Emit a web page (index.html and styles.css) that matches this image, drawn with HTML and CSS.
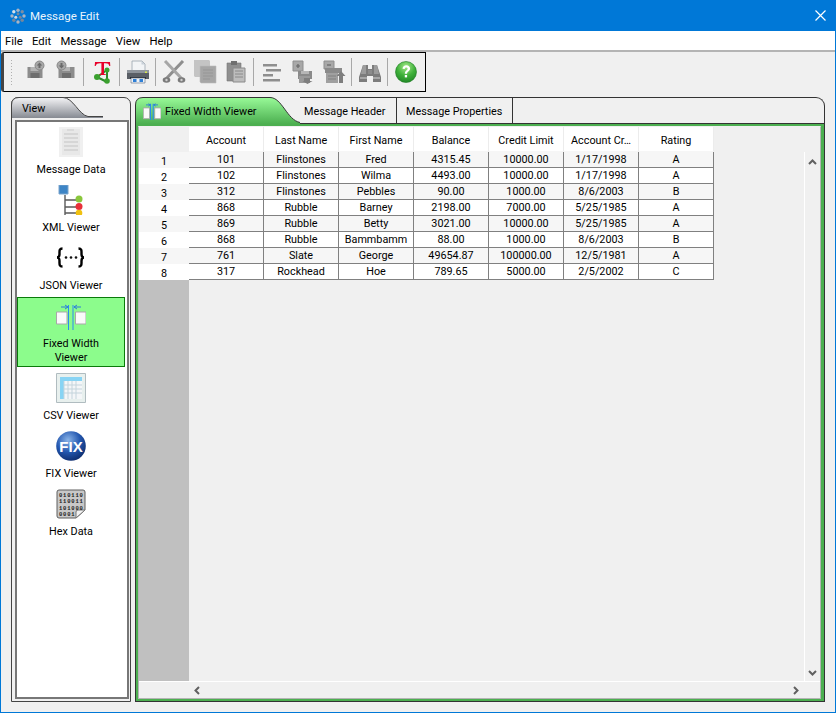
FILE: index.html
```html
<!DOCTYPE html>
<html lang="en">
<head>
<meta charset="utf-8">
<title>Message Edit</title>
<link rel="stylesheet" href="styles.css">
</head>
<body>
<div class="window">
  <header class="titlebar">
    <svg class="app-icon" width="16" height="16" viewBox="0 0 16 16">
      <circle cx="8" cy="2.2" r="1.7" fill="#a8b4c4"/><circle cx="12.2" cy="3.8" r="1.7" fill="#7e8ea2"/>
      <circle cx="14" cy="8" r="1.7" fill="#a8b4c4"/><circle cx="12.2" cy="12.2" r="1.700" fill="#76869a"/>
      <circle cx="8" cy="14" r="1.7" fill="#a8b4c4"/><circle cx="3.8" cy="12.2" r="1.700" fill="#76869a"/>
      <circle cx="2" cy="8" r="1.7" fill="#a8b4c4"/><circle cx="3.8" cy="3.8" r="1.700" fill="#d8e0e8"/>
      <circle cx="8" cy="5.8" r="1.5" fill="#76869a"/><circle cx="5.800" cy="9.200" r="1.500" fill="#d0d8e0"/><circle cx="10.200" cy="9.200" r="1.500" fill="#76869a"/>
    </svg>
    <span class="title">Message Edit</span>
    <svg class="close" width="11" height="11" viewBox="0 0 11 11"><path d="M.5 .5l10 10M10.500 .5l-10 10" stroke="#fff" stroke-width="1.200" fill="none"/></svg>
  </header>
  <nav class="menubar"><span>File</span><span>Edit</span><span>Message</span><span>View</span><span>Help</span></nav>

  <div class="toolbar">
    <span class="grip"></span>
    <button class="tool"><svg width="24" height="24" viewBox="0 0 24 24"><path d="M4.500 7h15v11h-15z" fill="#8c8c8c"/><path d="M7.500 7h8v4h-8z" fill="#b4b4b4"/><path d="M7.500 13h9v5h-9z" fill="#6e6e6e"/><circle cx="16.500" cy="5.500" r="4.500" fill="#a8a8a8" stroke="#888"/><path d="M16.500 2.500l-2.800 3h1.800v2.500h2V5.500h1.800z" fill="#6a6a6a"/></svg></button>
    <button class="tool"><svg width="24" height="24" viewBox="0 0 24 24"><path d="M4.500 7h16v11h-16z" fill="#8c8c8c"/><path d="M8 7h8v4H8z" fill="#b4b4b4"/><path d="M8 13h9v5H8z" fill="#6e6e6e"/><circle cx="7.500" cy="5.500" r="4.500" fill="#a8a8a8" stroke="#888"/><path d="M7.500 8.500l-2.800-3h1.800V3h2v2.500h1.800z" fill="#6a6a6a"/></svg></button>
    <i class="sep"></i>
    <button class="tool"><svg width="24" height="24" viewBox="0 0 24 24"><path d="M7 17l10-7M7 17l10 5M17 10v12" stroke="#2c8a2c" stroke-width="2"/><circle cx="17" cy="10" r="2.500" fill="#3aa02e"/><circle cx="7" cy="17" r="3" fill="#3aa02e"/><circle cx="17" cy="21" r="2.800" fill="#3aa02e"/><path d="M5 2h15l.3 4h-1c-.5-2-1.300-2.700-3.800-2.700h-1.500v9.900c0 .8.600 1 1.900 1V15H9.500v-.8c1.400 0 1.900-.2 1.900-1V3.300H10C7.500 3.300 6.200 4 5.700 6h-1z" fill="#e8002a"/></svg></button>
    <i class="sep"></i>
    <button class="tool"><svg width="24" height="24" viewBox="0 0 24 24"><path d="M6 1h10l3 3v8H6z" fill="#f2f4f6" stroke="#9aa4ae" stroke-width=".8"/><path d="M15.500 1v3.500H19" fill="#c8d0d8"/><path d="M1 10h22v9H1z" fill="#5a5f66"/><path d="M1 10h22v3H1z" fill="#8e949b"/><path d="M4 17h16v2H4z" fill="#2a2e33"/><path d="M5 18h14v5H5z" fill="#eef2f6" stroke="#5a6a80" stroke-width=".6"/><path d="M7 19h3.500v3H7z" fill="#2e7fd6"/><path d="M13.500 19H17v3h-3.500z" fill="#2e7fd6"/><path d="M19 11.500h2v1.500h-2z" fill="#d6e84a"/></svg></button>
    <i class="sep"></i>
    <button class="tool"><svg width="24" height="24" viewBox="0 0 24 24"><path d="M21 1L3 20" stroke="#8e8e8e" stroke-width="3"/><path d="M3 1l18 19" stroke="#a6a6a6" stroke-width="3"/><ellipse cx="4.500" cy="20" rx="3.800" ry="2.800" fill="#7a7a7a"/><ellipse cx="19.500" cy="20" rx="3.800" ry="2.800" fill="#7a7a7a"/><circle cx="4.500" cy="20" r="1.200" fill="#cfcfcf"/><circle cx="19.500" cy="20" r="1.200" fill="#cfcfcf"/></svg></button>
    <button class="tool"><svg width="24" height="24" viewBox="0 0 24 24"><path d="M1 0h15l1 1v16H2l-1-1z" fill="#c4c4c4"/><path d="M7 6h16v17H8l-1-1z" fill="#a6a6a6" stroke="#bcbcbc" stroke-width=".6"/><path d="M10 10h10M10 13h10M10 16h10M10 19h7" stroke="#969696"/></svg></button>
    <button class="tool"><svg width="24" height="24" viewBox="0 0 24 24"><path d="M3 3h14v18H3z" fill="#8f8f8f" stroke="#777" stroke-width=".6"/><path d="M7 1h6v4H7z" fill="#6f6f6f"/><path d="M9 8h12v14H9z" fill="#bdbdbd" stroke="#8a8a8a"/><path d="M11 11h8M11 14h8M11 17h8" stroke="#8a8a8a"/></svg></button>
    <i class="sep"></i>
    <button class="tool"><svg width="24" height="24" viewBox="0 0 24 24"><path d="M3 4h14v2.500H3zM6 9h15v2.500H6zM3 14h10v2.500H3zM3 19h17v2.500H3z" fill="#8e8e8e"/></svg></button>
    <button class="tool"><svg width="24" height="24" viewBox="0 0 24 24"><path d="M2 1h10v10H2z" fill="#a8a8a8" stroke="#8e8e8e"/><path d="M5 6h4M7 4v4" stroke="#666" stroke-width="1.200"/><path d="M7 11h14v8H7z" fill="#8a8a8a"/><path d="M10 11h8v3h-8z" fill="#b6b6b6"/><path d="M8 16h11v7H8z" fill="#9a9a9a"/><path d="M13 18h6v3h2.500l-5 3-5-3H13z" fill="#7e7e7e"/></svg></button>
    <button class="tool"><svg width="24" height="24" viewBox="0 0 24 24"><path d="M2 1h10v8H2z" fill="#a8a8a8" stroke="#8e8e8e"/><path d="M5 5h4" stroke="#666" stroke-width="1.200"/><path d="M3 8h17v5H3z" fill="#8a8a8a"/><path d="M4 13h12v10H4z" fill="#a0a0a0"/><path d="M6 16h8M6 19h8" stroke="#808080"/><path d="M19 11l4.500 5H21v7h-4v-7h-2.500z" fill="#7e7e7e"/></svg></button>
    <i class="sep"></i>
    <button class="tool"><svg width="24" height="24" viewBox="0 0 24 24"><path d="M5 5h5v4h4V5h5l4 12v5h-8v-6h-6v6H1v-5z" fill="#7c7c7c"/><path d="M5 5h3v9H3zM16 5h3l2 9h-5z" fill="#9c9c9c"/><path d="M10 10h4v4h-4z" fill="#8c8c8c"/><path d="M2 17h7v2H2zM15 17h7v2h-7z" fill="#a8a8a8"/></svg></button>
    <i class="sep"></i>
    <button class="tool"><svg width="24" height="24" viewBox="0 0 24 24"><defs><radialGradient id="help" cx=".5" cy=".25" r=".85"><stop offset="0" stop-color="#a4e88a"/><stop offset=".5" stop-color="#3fb13a"/><stop offset="1" stop-color="#1b7d22"/></radialGradient></defs><circle cx="12" cy="12" r="10.500" fill="url(#help)" stroke="#1a7a20" stroke-width=".6"/><path d="M8.500 8.800c.2-2.300 1.700-3.500 3.800-3.500 2.200 0 3.800 1.300 3.800 3.200 0 2.700-3 2.800-3 5.200h-2.300c0-3.300 2.800-3.400 2.800-5 0-.8-.6-1.300-1.400-1.300-.9 0-1.400.6-1.500 1.600z" fill="#fff"/><path d="M10.800 15h2.300v2.400h-2.300z" fill="#fff"/></svg></button>
  </div>

  <main class="workspace">
    <aside class="panel">
      <div class="panel-tab">
        <svg class="panel-tab-shape" width="92" height="21" viewBox="0 0 92 21"><defs><linearGradient id="viewgrad" x1="0" y1="0" x2="0" y2="1"><stop offset="0" stop-color="#f4f4f6"/><stop offset="1" stop-color="#868a92"/></linearGradient></defs><path d="M.5 21V8Q.5 .5 8 .5H52C62 .5 68 18 77 19.500H92V21z" fill="url(#viewgrad)"/><path d="M.5 21V8Q.5 .5 8 .5H52C62 .5 68 18 77 19.500H92" fill="none" stroke="#444"/></svg>
        <span class="panel-tab-label">View</span>
      </div>
      <div class="viewlist">
        <div class="viewitem">
          <svg width="30" height="30" viewBox="0 0 30 30"><path d="M3 0h24v30H3z" fill="#f0f0f0"/><path d="M6 2h18v26H6z" fill="#e8e8e8"/><path d="M8 6h14v2H8zM8 10h14v2H8zM8 14h14v2H8zM8 18h14v2H8zM8 22h14v2H8z" fill="#d6d6d6"/><path d="M11 2h7v2h-7z" fill="#dadada"/></svg>
          <span>Message Data</span>
        </div>
        <div class="viewitem">
          <svg width="30" height="30" viewBox="0 0 30 30"><path d="M9 10v20M9 15h13M9 22h13M9 28h13" stroke="#5a5a5a" stroke-width="1.400" fill="none"/><path d="M3 0h9v9H3z" fill="#3d85c6" stroke="#7aa4cc"/><circle cx="23" cy="14" r="3.500" fill="#8ac73c"/><circle cx="23" cy="21.500" r="3.500" fill="#e8303a"/><circle cx="23" cy="28" r="3.300" fill="#f0c010"/></svg>
          <span>XML Viewer</span>
        </div>
        <div class="viewitem">
          <svg width="30" height="30" viewBox="0 0 30 30"><path d="M6.500 5.500C3 5.500 3.500 8 3.500 11c0 2-.5 3.500-2.500 3.500 2 0 2.500 1.500 2.500 3.500 0 3-.5 5.500 3 5.500" fill="none" stroke="#000" stroke-width="2.400"/><path d="M22.500 5.500c3.500 0 3 2.500 3 5.500 0 2 .5 3.500 2.500 3.500-2 0-2.500 1.500-2.500 3.500 0 3 .5 5.500-3 5.500" fill="none" stroke="#000" stroke-width="2.400"/><circle cx="10" cy="14.500" r="1.300" fill="#111"/><circle cx="15" cy="14.500" r="1.300" fill="#111"/><circle cx="20" cy="14.500" r="1.300" fill="#111"/></svg>
          <span>JSON Viewer</span>
        </div>
        <div class="viewitem is-active">
          <svg width="30" height="30" viewBox="0 0 30 30"><path d="M.5 11h10.500v12H.5zM19.500 11H30v12H19.500z" fill="#fafafa" stroke="#a8a8a8"/><path d="M12.500 4v25M17 4v25" stroke="#2a8cf0"/><path d="M5 6h7M9 4l3 2-3 2M25 6h-7M21 4l-3 2 3 2" stroke="#2a7cd8" fill="none"/></svg>
          <span>Fixed Width<br>Viewer</span>
        </div>
        <div class="viewitem">
          <svg width="30" height="30" viewBox="0 0 30 30"><path d="M.5 .5h29v29H.5z" fill="#e8f0ee" stroke="#b0bcc0"/><path d="M4 4h22v22H4z" fill="#f4f6f8"/><path d="M4 4h22v4H4zM4 8h4v18H4z" fill="#88d4f4"/><path d="M8 12h18M8 16h18M8 20h18M12 8v18M16 8v18M20 8v18M8 8v18" stroke="#c4d4dc"/></svg>
          <span>CSV Viewer</span>
        </div>
        <div class="viewitem">
          <svg width="30" height="30" viewBox="0 0 30 30"><defs><radialGradient id="globe" cx=".4" cy=".3" r=".8"><stop offset="0" stop-color="#8ab4e8"/><stop offset=".5" stop-color="#2458b0"/><stop offset="1" stop-color="#0a2460"/></radialGradient></defs><circle cx="15" cy="15" r="14.800" fill="url(#globe)"/><text x="15" y="20.500" text-anchor="middle" class="fix">FIX</text></svg>
          <span>FIX Viewer</span>
        </div>
        <div class="viewitem">
          <svg width="30" height="30" viewBox="0 0 30 30"><path d="M3 1h24a2 2 0 0 1 2 2v18l-9 8H3a2 2 0 0 1-2-2V3a2 2 0 0 1 2-2z" fill="#c8c8c8" stroke="#5e5e5e"/><path d="M29 21h-7a2 2 0 0 0-2 2v6z" fill="#f2f2f2" stroke="#777"/><text x="3" y="7.500" class="bits">010110</text><text x="3" y="14" class="bits">110011</text><text x="3" y="20.500" class="bits">101000</text><text x="3" y="27" class="bits">0001</text></svg>
          <span>Hex Data</span>
        </div>
      </div>
    </aside>

    <section class="pane">
      <div class="tabs">
        <div class="tab-active">
          <svg class="tab-shape" width="166" height="27" viewBox="0 0 166 27"><defs><linearGradient id="tabgrad" x1="0" y1="0" x2="0" y2="1"><stop offset="0" stop-color="#98fa98"/><stop offset="1" stop-color="#4caf50"/></linearGradient></defs><path d="M.5 27V8Q.5 .5 8 .5H135C147 .5 152 23 165 25.500V27z" fill="url(#tabgrad)"/><path d="M.5 27V8Q.5 .5 8 .5H135C147 .5 152 23 165 25.500" fill="none" stroke="#333"/></svg>
          <svg class="tab-icon" width="18" height="17" viewBox="0 3 30 28"><path d="M.5 11h10.500v18H.5zM19.500 11H30v18H19.500z" fill="#fafafa" stroke="#a8a8a8" stroke-width="1.500"/><path d="M12.500 4v27M17 4v27" stroke="#2a8cf0" stroke-width="1.800"/><path d="M5 6h7M9 4l3 2-3 2M25 6h-7M21 4l-3 2 3 2" stroke="#2a7cd8" stroke-width="1.500" fill="none"/></svg>
          <span class="tab-active-label">Fixed Width Viewer</span>
        </div>
        <div class="tab tab-header">Message Header</div>
        <div class="tab tab-props">Message Properties</div>
        <div class="tab-fill"></div>
      </div>
      <div class="frame">
        <div class="frame-green">
          <div class="frame-inner">
            <div class="sheet">
              <div class="rowheads">
                <div class="corner"></div>
                <div class="rowhead">1</div><div class="rowhead">2</div><div class="rowhead">3</div><div class="rowhead">4</div>
                <div class="rowhead">5</div><div class="rowhead">6</div><div class="rowhead">7</div><div class="rowhead">8</div>
                <div class="rowfill"></div>
              </div>
              <div class="tablewrap">
                <table class="data">
                  <thead>
                    <tr><th>Account</th><th>Last Name</th><th>First Name</th><th>Balance</th><th>Credit Limit</th><th>Account Cr…</th><th>Rating</th></tr>
                  </thead>
                  <tbody>
                    <tr><td>101</td><td>Flinstones</td><td>Fred</td><td>4315.45</td><td>10000.00</td><td>1/17/1998</td><td>A</td></tr>
                    <tr><td>102</td><td>Flinstones</td><td>Wilma</td><td>4493.00</td><td>10000.00</td><td>1/17/1998</td><td>A</td></tr>
                    <tr><td>312</td><td>Flinstones</td><td>Pebbles</td><td>90.00</td><td>1000.00</td><td>8/6/2003</td><td>B</td></tr>
                    <tr><td>868</td><td>Rubble</td><td>Barney</td><td>2198.00</td><td>7000.00</td><td>5/25/1985</td><td>A</td></tr>
                    <tr><td>869</td><td>Rubble</td><td>Betty</td><td>3021.00</td><td>10000.00</td><td>5/25/1985</td><td>A</td></tr>
                    <tr><td>868</td><td>Rubble</td><td>Bammbamm</td><td>88.00</td><td>1000.00</td><td>8/6/2003</td><td>B</td></tr>
                    <tr><td>761</td><td>Slate</td><td>George</td><td>49654.87</td><td>100000.00</td><td>12/5/1981</td><td>A</td></tr>
                    <tr><td>317</td><td>Rockhead</td><td>Hoe</td><td>789.65</td><td>5000.00</td><td>2/5/2002</td><td>C</td></tr>
                  </tbody>
                </table>
              </div>
              <div class="vscroll">
                <svg width="9" height="6" viewBox="0 0 9 6"><path d="M1 5l3.500-3.500L8 5" stroke="#606060" stroke-width="2" fill="none"/></svg>
                <svg width="9" height="6" viewBox="0 0 9 6"><path d="M1 1l3.500 3.500L8 1" stroke="#606060" stroke-width="2" fill="none"/></svg>
              </div>
            </div>
            <div class="hscroll">
              <svg width="6" height="9" viewBox="0 0 6 9"><path d="M5 1L1.500 4.500 5 8" stroke="#606060" stroke-width="2" fill="none"/></svg>
              <svg width="6" height="9" viewBox="0 0 6 9"><path d="M1 1l3.500 3.500L1 8" stroke="#606060" stroke-width="2" fill="none"/></svg>
            </div>
          </div>
        </div>
      </div>
    </section>
  </main>
</div>
</body>
</html>
```

FILE: styles.css
```css
* { box-sizing: border-box; }

html, body {
  margin: 0;
  padding: 0;
}

body {
  font-family: "Roboto", "Open Sans", sans-serif;
  font-size: 10.8px;
  color: #000;
  background: #f0f0f0;
}

.window {
  width: 836px;
  height: 713px;
  border: 1px solid #0078d7;
  border-top: 0;
  background: #f0f0f0;
  display: flex;
  flex-direction: column;
  overflow: hidden;
}

.titlebar {
  height: 31px;
  flex: none;
  background: #0078d7;
  color: #fff;
  display: flex;
  align-items: center;
  padding-left: 9px;
  padding-right: 9px;
}

.app-icon { flex: none; margin-right: 4px; }

.title { font-size: 11.5px; color: #eaf4fc; }

.close { margin-left: auto; }

.menubar {
  height: 21px;
  flex: none;
  background: #fff;
  border-bottom: 2px solid #b4b4b4;
  display: flex;
  align-items: center;
  padding: 1px 0 0 4px;
  gap: 9.3px;
  font-size: 11.3px;
}

.toolbar {
  width: 425px;
  height: 40px;
  flex: none;
  border: 1px solid #000;
  border-left: 3px solid #444;
  border-radius: 3px 0 0 3px;
  display: flex;
  align-items: center;
  padding-left: 6px;
}

.grip {
  width: 3px;
  height: 26px;
  margin-right: 6px;
  background-image: radial-gradient(circle, #b0b0b0 0.6px, transparent 0.7px);
  background-size: 3px 3px;
}

.tool {
  width: 31px;
  height: 30px;
  padding: 0;
  border: 0;
  background: none;
  display: flex;
  align-items: center;
  justify-content: center;
}

.sep {
  width: 1px;
  height: 28px;
  margin: 0 2px;
  background: #a8a8a8;
}

.workspace {
  flex: 1;
  min-height: 0;
  display: flex;
  gap: 4px;
  padding: 5px 10px 10px 10px;
}

/* left view chooser */
.panel {
  width: 120px;
  flex: none;
  display: flex;
  flex-direction: column;
  border: 1px solid #444;
  border-radius: 7px 7px 0 0;
  padding: 0 1px 2px 3px;
}

.panel-tab {
  position: relative;
  height: 22px;
  flex: none;
  margin-left: -3px;
}

.panel-tab-shape {
  position: absolute;
  left: -1px;
  top: -1px;
}

.panel-tab-label {
  position: absolute;
  left: 10px;
  top: 4px;
}

.viewlist {
  flex: 1;
  background: #fff;
  border: 2px solid #777;
  padding: 1px 2px 0 0;
  display: flex;
  flex-direction: column;
}

.viewitem {
  height: 58px;
  flex: none;
  padding-top: 4px;
  display: flex;
  flex-direction: column;
  align-items: center;
  text-align: center;
  line-height: 14px;
}

.viewitem svg {
  flex: none;
  margin-bottom: 6px;
}

.viewitem.is-active {
  height: 70px;
  margin-bottom: 2px;
  background: #8cfc8c;
  border: 1px solid #0a7a0a;
  padding-top: 3px;
}

.fix {
  font-family: "Liberation Sans", sans-serif;
  font-size: 15px;
  font-weight: 700;
  fill: #fff;
}

.bits {
  font-family: "Liberation Mono", monospace;
  font-size: 5.500px;
  font-weight: 700;
  letter-spacing: .8px;
  fill: #222;
}

/* right tab pane */
.pane {
  flex: 1;
  min-width: 0;
  display: flex;
  flex-direction: column;
}

.tabs {
  height: 26px;
  flex: none;
  display: flex;
}

.tab-active {
  position: relative;
  width: 165px;
  flex: none;
  z-index: 1;
}

.tab-shape {
  position: absolute;
  left: 0;
  top: 0;
}

.tab-icon {
  position: absolute;
  left: 8px;
  top: 6px;
}

.tab-active-label {
  position: absolute;
  left: 30px;
  top: 8px;
  white-space: nowrap;
}

.tab {
  border-top: 1px solid #333;
  border-right: 1px solid #333;
  padding: 7px 0 0 0;
  white-space: nowrap;
}

.tab-header { width: 97px; padding-left: 4px; }
.tab-props { width: 116px; padding-left: 9px; }

.tab-fill {
  flex: 1;
  border-top: 1px solid #333;
  border-right: 1px solid #333;
  border-radius: 0 9px 0 0;
}

.frame {
  flex: 1;
  min-height: 0;
  border: 1px solid #333;
  display: flex;
}

.frame-green {
  flex: 1;
  min-width: 0;
  border: 2px solid #4caf50;
  border-right-width: 3px;
  display: flex;
}

.frame-inner {
  flex: 1;
  min-width: 0;
  border: 1px solid #b4b4b4;
  border-top: 1px solid #f0f0f0;
  display: flex;
  flex-direction: column;
}

.sheet {
  flex: 1;
  min-height: 0;
  display: flex;
}

.rowheads {
  width: 50px;
  flex: none;
  display: flex;
  flex-direction: column;
}

.corner { height: 25px; flex: none; background: #f0f0f0; }

.rowhead {
  height: 16px;
  flex: none;
  text-align: center;
  line-height: 19px;
  background: #fff;
}

.rowhead:nth-child(even) { background: #f6f6f6; }

.rowfill { flex: 1; background: #c0c0c0; }

.tablewrap {
  flex: 1;
  min-width: 0;
}

.data {
  width: 525px;
  table-layout: fixed;
  border-collapse: separate;
  border-spacing: 0;
}

.data th {
  height: 25px;
  padding: 2px 0 0;
  font-weight: 400;
  background: #fff;
  border-right: 1px solid #ececec;
  border-bottom: 1px solid #f6f6f6;
}

.data td {
  height: 16px;
  padding: 1px 0 0;
  text-align: center;
  vertical-align: top;
  line-height: 14px;
  border-right: 1px solid #808080;
  border-bottom: 1px solid #808080;
  background: #fff;
}

.data tbody tr:nth-child(odd) td { background: #f6f6f6; }

.vscroll {
  width: 16px;
  flex: none;
  margin-top: 25px;
  border-left: 1px solid #fff;
  display: flex;
  flex-direction: column;
  align-items: center;
  justify-content: space-between;
  padding: 7px 0 5px;
}

.hscroll {
  height: 17px;
  flex: none;
  border-top: 1px solid #fff;
  display: flex;
  align-items: center;
  justify-content: space-between;
  padding: 0 21px 0 55px;
}
```
